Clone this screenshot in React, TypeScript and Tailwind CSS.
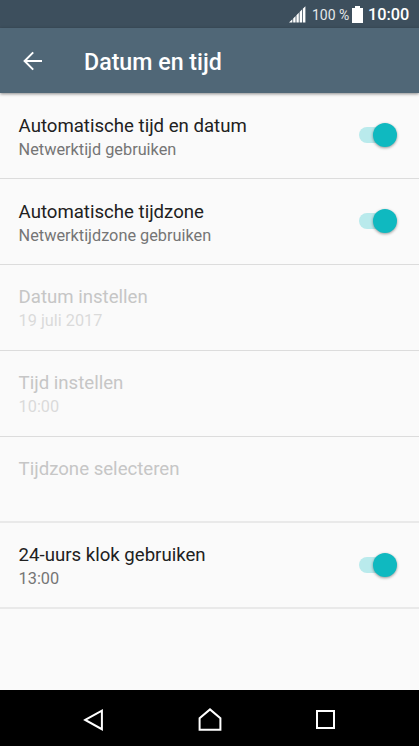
import clsx from 'clsx';

type Setting = {
  title: string;
  summary?: string;
  toggle?: boolean;
  disabled?: boolean;
  softDivider?: boolean;
};

const settings: Setting[] = [
  { title: 'Automatische tijd en datum', summary: 'Netwerktijd gebruiken', toggle: true },
  { title: 'Automatische tijdzone', summary: 'Netwerktijdzone gebruiken', toggle: true },
  { title: 'Datum instellen', summary: '19 juli 2017', disabled: true },
  { title: 'Tijd instellen', summary: '10:00', disabled: true },
  { title: 'Tijdzone selecteren', disabled: true, softDivider: true },
  { title: '24-uurs klok gebruiken', summary: '13:00', toggle: true, softDivider: true },
];

function StatusBar() {
  return (
    <div className="flex h-7 shrink-0 items-center bg-[#3d4f5d] pr-[9px] text-white">
      <svg className="ml-auto" width="17" height="17" viewBox="0 0 17 17" fill="currentColor">
        <path d="M0 16.5 3.4 13.2V16.5ZM4.2 12.4 6.6 10V16.5H4.2ZM7.4 9.2 9.8 6.8V16.5H7.4ZM10.6 6 13 3.6V16.5H10.6ZM13.8 2.8 16.4.3V16.5H13.8Z" />
      </svg>
      <span className="ml-[6px] w-10 whitespace-nowrap pt-px text-[14px] leading-7 text-[#e4e8ea]">100 %</span>
      <svg className="mr-[5px]" width="11" height="17" viewBox="0 0 11 17" fill="currentColor">
        <path d="M3 0H8V2H11V17H0V2H3Z" />
      </svg>
      <span className="w-[42px] whitespace-nowrap pt-px text-[16.3px] font-medium leading-7">10:00</span>
    </div>
  );
}

function Header() {
  return (
    <header className="relative flex h-[65px] shrink-0 items-center bg-[#506777] pl-[22px] text-white shadow-[0_1px_3px_rgba(0,0,0,0.45)]">
      <svg width="22" height="22" viewBox="0 0 22 22" fill="none" stroke="currentColor" strokeWidth="2">
        <path d="M20 11H3M11.2 2.4 2.6 11 11.2 19.6" />
      </svg>
      <h1 className="ml-10 pt-[2px] text-[23.2px] font-medium leading-8">Datum en tijd</h1>
    </header>
  );
}

function Switch() {
  return (
    <div className="mr-[22.5px] flex h-6 w-[38px] items-center justify-end">
      <div className="-mr-[22px] h-4 w-[36px] rounded-full bg-[#b9eaec]" />
      <div className="relative size-[23.5px] rounded-full bg-[#0fb9c0] shadow-[0_1px_3px_rgba(0,0,0,0.4)]" />
    </div>
  );
}

function SettingRow({ title, summary, toggle, disabled, softDivider }: Setting) {
  return (
    <li
      className={clsx(
        'flex h-[86px] justify-between pl-[18.6px]',
        softDivider ? 'border-b-2 border-[#e9e9e9]' : 'border-b border-[#dcdcdc]',
      )}
    >
      <div className={disabled || softDivider ? 'pt-5' : 'pt-[21px]'}>
        <div className={clsx('text-[18.62px] leading-6', disabled ? 'text-[#c6c6c6]' : 'text-[#212121]')}>{title}</div>
        {summary && (
          <div className={clsx('text-[16.3px] leading-[23px]', disabled ? 'text-[#dadada]' : 'text-[#757575]')}>
            {summary}
          </div>
        )}
      </div>
      {toggle && (
        <div className="pt-[30px]">
          <Switch />
        </div>
      )}
    </li>
  );
}

function NavBar() {
  return (
    <nav className="mt-auto flex h-14 shrink-0 items-center justify-between bg-black px-[82px] pt-1 text-white">
      <svg width="24" height="24" viewBox="0 0 24 24" fill="none" stroke="currentColor" strokeWidth="2">
        <path d="M3.2 11.9 19.9 2.6V21.2Z" />
      </svg>
      <svg width="24" height="24" viewBox="0 0 24 24" fill="none" stroke="currentColor" strokeWidth="2">
        <path d="M1.6 21.8V10.2L12 1.4 22.4 10.2V21.8Z" />
      </svg>
      <svg width="24" height="24" viewBox="0 0 24 24" fill="none" stroke="currentColor" strokeWidth="2">
        <rect x="4" y="3" width="17" height="17" />
      </svg>
    </nav>
  );
}

export default function App() {
  return (
    <div className="flex h-[746px] w-[419px] flex-col overflow-hidden bg-[#fafafa] font-[Roboto,sans-serif]">
      <StatusBar />
      <Header />
      <ul>
        {settings.map((s) => (
          <SettingRow key={s.title} {...s} />
        ))}
      </ul>
      <NavBar />
    </div>
  );
}
